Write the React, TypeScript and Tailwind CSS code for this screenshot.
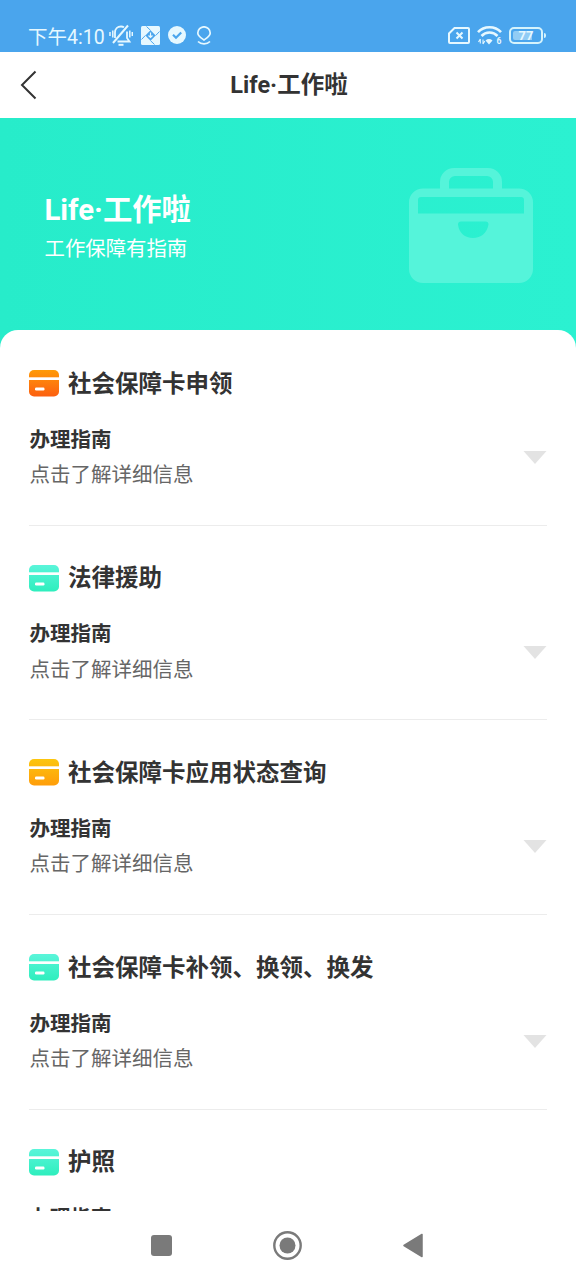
interface Service {
  id: string;
  title: string;
  from: string;
  to: string;
}

const services: Service[] = [
  { id: "apply", title: "社会保障卡申领", from: "#ff9a08", to: "#fc5f10" },
  { id: "legal", title: "法律援助", from: "#5af5da", to: "#2eeebd" },
  { id: "status", title: "社会保障卡应用状态查询", from: "#fcc60e", to: "#ff9d0a" },
  { id: "replace", title: "社会保障卡补领、换领、换发", from: "#5af5da", to: "#2eeebd" },
  { id: "passport", title: "护照", from: "#5af5da", to: "#2eeebd" },
];

function StatusBar() {
  return (
    <div className="flex h-[52px] shrink-0 items-start justify-between bg-[#4aa5ed] pt-[22px] pr-[30px] pl-7 text-[#e6f8ff]">
      <div className="flex h-[26px] items-center">
        <span className="w-[77px] pt-[5px] text-[19.5px] leading-[26px] whitespace-nowrap">下午4:10</span>
        <svg className="ml-1 h-6 w-6" viewBox="0 0 24 24" fill="none" stroke="currentColor" strokeWidth="1.8">
          <path d="M6 15V9.500C6 6 8.500 3.500 12 3.500c1.200 0 2.200.3 3 .8M18 8.500v6.500l2.500 3.500H8.500" />
          <path d="M4 20 19 2.500" strokeWidth="2" />
          <path d="M9.500 21.800h5" strokeWidth="2" />
          <path d="M1 9v4M3.800 7.500v7M20.800 7.500v7M23.300 9v4" strokeWidth="1.500" />
        </svg>
        <svg className="ml-2 h-[19px] w-[19px]" viewBox="0 0 19 19">
          <rect width="19" height="19" rx="1.500" fill="currentColor" />
          <path d="M9.500 4.300 14.700 9.500 9.500 14.700 4.300 9.500Z" fill="#4aa5ed" />
          <path d="M9.500 4.300 5.500 0.500M14.700 9.500 18.500 5.500M9.500 14.700 13.500 18.500M4.300 9.500 0.500 13.500" stroke="#4aa5ed" strokeWidth="1" />
          <path d="M9.500 6.500v5M7.500 9.500l2 2 2-2" stroke="currentColor" strokeWidth="1.200" fill="none" />
        </svg>
        <svg className="ml-2 h-[18px] w-[18px]" viewBox="0 0 18 18">
          <circle cx="9" cy="9" r="9" fill="currentColor" />
          <path d="m5 8.800 3 3L13.200 6.500" fill="none" stroke="#4aa5ed" strokeWidth="2.200" />
        </svg>
        <svg className="ml-2.5 h-[19px] w-4" viewBox="0 0 16 19" fill="none" stroke="currentColor" strokeWidth="1.700">
          <path d="M8 14C5.200 12 1.800 10.200 1.800 7a6.200 6.200 0 0 1 12.400 0c0 3.200-3.400 5-6.200 7Z" />
          <path d="M2 15.500c1.500 1.500 3.700 2.300 6 2.300s4.500-.8 6-2.300" />
        </svg>
      </div>
      <div className="flex h-[26px] items-center">
        <svg className="h-[17px] w-[22px]" viewBox="0 0 22 17" fill="none" stroke="currentColor" strokeWidth="2">
          <path d="M6.500 1H20a1 1 0 0 1 1 1v13a1 1 0 0 1-1 1H2a1 1 0 0 1-1-1V6.500Z" />
          <path d="m8.500 5.500 6 6M14.500 5.500l-6 6" />
        </svg>
        <svg className="ml-[7px] h-5 w-[25px]" viewBox="0 0 25 20" fill="none" stroke="currentColor" strokeWidth="2.600">
          <path d="M1 7.200c6-6.600 17-6.600 23 0" />
          <path d="M4.500 11c4.300-4.600 11.700-4.600 16 0" />
          <path d="M8.500 15.500a5.500 5.500 0 0 1 7 0L12 19.500Z" fill="currentColor" stroke="none" />
          <path d="M3.300 14v4.500M1.500 17l1.800-3M6 19v-4.500M7.800 16 6 19" strokeWidth="1.100" />
          <text x="19.500" y="18.800" fontSize="8.500" fontWeight="700" fill="currentColor" stroke="none">
            6
          </text>
        </svg>
        <div className="ml-[7px] flex h-[17px] w-[34px] items-center rounded-[5px] border-2 border-[#d5f3fc] p-[2px]">
          <div className="flex h-full w-full items-center justify-center rounded-[2px] bg-gradient-to-r from-[#91ccf5] from-75% to-transparent to-75% text-[13px] leading-none font-bold">
            77
          </div>
        </div>
        <div className="ml-px h-[5px] w-[2px] rounded-r bg-[#d5f3fc]" />
      </div>
    </div>
  );
}

function Header() {
  return (
    <header className="grid h-[66px] shrink-0 grid-cols-[60px_1fr_60px] items-center bg-white">
      <button aria-label="返回" className="pl-5">
        <svg className="h-[30px] w-[18px]" viewBox="0 0 18 30" fill="none" stroke="#333" strokeWidth="2">
          <path d="M15.500 1.500 2 15l13.500 13.500" />
        </svg>
      </button>
      <h1 className="pt-[2px] pl-[2px] text-center text-[23.5px] font-bold text-[#333]">Life·工作啦</h1>
    </header>
  );
}

function Banner() {
  return (
    <div className="flex h-[231px] items-start justify-between bg-gradient-to-r from-[#27ecca] to-[#2bf1d1] pr-[43px] pl-[44.500px] text-white">
      <div className="pt-[72px]">
        <h2 className="text-[29.3px] leading-[41px] font-bold">Life·工作啦</h2>
        <p className="text-[20.400px] leading-[36px]">工作保障有指南</p>
      </div>
      <svg className="mt-[50px] h-[115px] w-[124px]" viewBox="0 0 124 115" fill="#55f4da">
        <path d="M31 21V14A14 14 0 0 1 45 0H79A14 14 0 0 1 93 14V21H84V14a6 6 0 0 0-6-6H46a6 6 0 0 0-6 6V21Z" />
        <path
          fillRule="evenodd"
          d="M14 20.500H110a14 14 0 0 1 14 14V101a14 14 0 0 1-14 14H14A14 14 0 0 1 0 101V34.500a14 14 0 0 1 14-14ZM12 29a3 3 0 0 0-3 3V45.500H115V32a3 3 0 0 0-3-3ZM52 53.500a3 3 0 0 0-3 3C50 65 56 70 64 70s14-5 15.500-13.500a3 3 0 0 0-3-3Z"
        />
      </svg>
    </div>
  );
}

function CardIcon({ id, from, to }: { id: string; from: string; to: string }) {
  return (
    <svg className="h-[27px] w-[30px] shrink-0" viewBox="0 0 30 27">
      <defs>
        <linearGradient id={`card-${id}`} x1="0" y1="0" x2="0" y2="1">
          <stop offset="0" stopColor={from} />
          <stop offset="1" stopColor={to} />
        </linearGradient>
      </defs>
      <rect width="30" height="26.500" rx="5" fill={`url(#card-${id})`} />
      <path d="M0 7.300h30v2.700H0z" fill="#fff" />
      <rect x="6" y="17.500" width="9.500" height="3" rx="1.200" fill="#fff" />
    </svg>
  );
}

function ServiceItem({ service }: { service: Service }) {
  return (
    <section className="mx-[29px] h-[194.600px] border-b border-[#ececec] pt-[36.500px]">
      <div className="flex h-8 items-center gap-[9px]">
        <CardIcon id={service.id} from={service.from} to={service.to} />
        <h3 className="text-[23.500px] leading-8 font-bold whitespace-nowrap text-[#333]">{service.title}</h3>
      </div>
      <div className="mt-[22px] flex items-center justify-between">
        <div className="pt-px pl-[0.5px] text-[20.500px] leading-[35.500px]">
          <h4 className="font-bold text-[#333]">办理指南</h4>
          <p className="text-[#666]">点击了解详细信息</p>
        </div>
        <svg className="h-[13px] w-6" viewBox="0 0 24 13">
          <path d="M0.500 0h23L12 13Z" fill="#e3e3e3" />
        </svg>
      </div>
    </section>
  );
}

function NavBar() {
  return (
    <nav className="flex h-[69px] shrink-0 items-center justify-between bg-white pr-[153px] pl-[151px]">
      <div className="h-[21px] w-[21px] rounded-[3px] bg-[#7a7a7a]" />
      <svg className="h-[29px] w-[29px]" viewBox="0 0 29 29">
        <circle cx="14.500" cy="14.500" r="13.200" fill="none" stroke="#7a7a7a" strokeWidth="2.400" />
        <circle cx="14.500" cy="14.500" r="8" fill="#7a7a7a" />
      </svg>
      <svg className="h-[25px] w-5" viewBox="0 0 20 25">
        <path d="M1 12.500 19 1.500v22Z" fill="#7a7a7a" stroke="#7a7a7a" strokeWidth="1.500" strokeLinejoin="round" />
      </svg>
    </nav>
  );
}

export default function App() {
  return (
    <div className="flex h-[1280px] w-[576px] flex-col overflow-hidden bg-white font-[Roboto,'Noto_Sans_CJK_SC',sans-serif]">
      <StatusBar />
      <Header />
      <main className="min-h-0 flex-1 overflow-hidden">
        <Banner />
        <div className="relative -mt-[19px] rounded-t-[18px] bg-white pt-[1.300px]">
          {services.map((service) => (
            <ServiceItem key={service.id} service={service} />
          ))}
        </div>
      </main>
      <NavBar />
    </div>
  );
}
